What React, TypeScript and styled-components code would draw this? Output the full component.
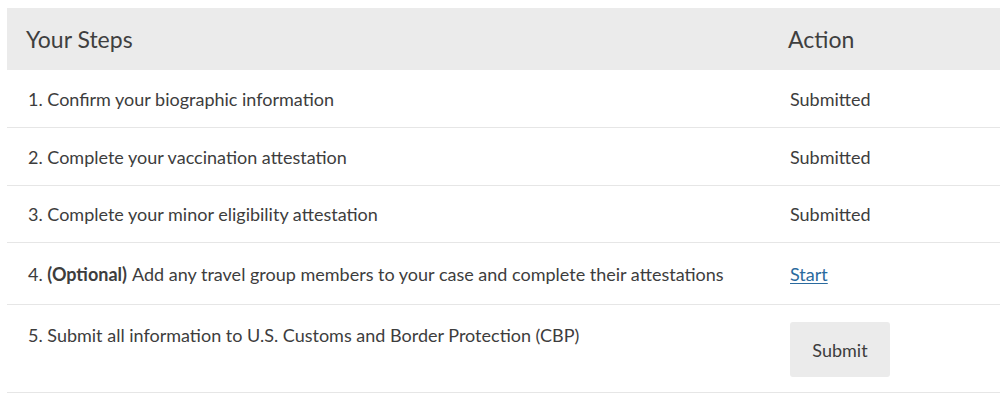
import React from 'react'
import styled, { createGlobalStyle } from 'styled-components'

const GlobalStyle = createGlobalStyle`
  body {
    margin: 0;
    padding: 8px 0 0 7px;
    background: #ffffff;
    overflow: hidden;
    font-family: Lato, "Noto Sans", sans-serif;
    color: #3d3d3d;
  }
`

const Table = styled.div`
  width: 1010px;
  display: grid;
  grid-template-columns: 762px 1fr;
`

const HeadCell = styled.div`
  background: #ebebeb;
  height: 62px;
  display: flex;
  align-items: center;
  padding-left: 19px;
  font-size: 23px;
  color: #3f3f3f;
`

const Cell = styled.div<{ $h: number; $top?: boolean }>`
  height: ${p => p.$h}px;
  box-sizing: border-box;
  border-bottom: 1px solid #e6e6e6;
  display: flex;
  align-items: ${p => (p.$top ? 'flex-start' : 'center')};
  padding: ${p => (p.$top ? '18px 0 0 21px' : '1px 0 0 21px')};
  font-size: 18px;
  line-height: 25px;
  color: #3d3d3d;
  white-space: nowrap;
`

const Bold = styled.strong`
  font-weight: 700;
  margin-right: 5px;
`

const StartLink = styled.a`
  color: #2a6a9e;
  text-decoration: underline;
  text-underline-offset: 2px;
  cursor: pointer;
`

const SubmitButton = styled.button`
  margin-top: -1px;
  width: 100px;
  height: 55px;
  border: none;
  border-radius: 3px;
  background: #ebebeb;
  color: #3d3d3d;
  font-family: inherit;
  font-size: 18px;
  cursor: pointer;
`

type Step = { text: React.ReactNode; action: React.ReactNode; h: number; top?: boolean }

const steps: Step[] = [
  { text: '1. Confirm your biographic information', action: 'Submitted', h: 58 },
  { text: '2. Complete your vaccination attestation', action: 'Submitted', h: 58 },
  { text: '3. Complete your minor eligibility attestation', action: 'Submitted', h: 57 },
  {
    text: (
      <span>
        4. <Bold>(Optional)</Bold>Add any travel group members to your case and complete their attestations
      </span>
    ),
    action: <StartLink>Start</StartLink>,
    h: 62,
  },
  {
    text: '5. Submit all information to U.S. Customs and Border Protection (CBP)',
    action: <SubmitButton>Submit</SubmitButton>,
    h: 88,
    top: true,
  },
]

export default function App() {
  return (
    <>
      <GlobalStyle />
      <Table>
        <HeadCell>Your Steps</HeadCell>
        <HeadCell>Action</HeadCell>
        {steps.map((s, i) => (
          <React.Fragment key={i}>
            <Cell $h={s.h} $top={s.top}>{s.text}</Cell>
            <Cell $h={s.h} $top={s.top}>{s.action}</Cell>
          </React.Fragment>
        ))}
      </Table>
    </>
  )
}
